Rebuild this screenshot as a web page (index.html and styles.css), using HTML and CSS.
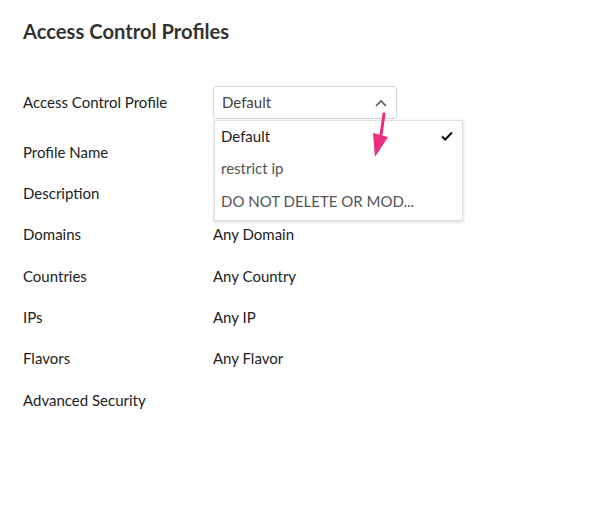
FILE: index.html
```html
<!DOCTYPE html>
<html>
<head>
<meta charset="utf-8">
<link rel="stylesheet" href="styles.css">
</head>
<body>
<div class="page">
  <h1 class="title">Access Control Profiles</h1>
  <div class="form">
    <div class="row row-select">
      <div class="label">Access Control Profile</div>
      <div class="value">
        <div class="select-wrap">
          <div class="select">
            <span>Default</span>
            <svg class="caret" width="12" height="8" viewBox="0 0 12 8"><path d="M1 7 L6 2 L11 7" fill="none" stroke="#555" stroke-width="1.6"/></svg>
          </div>
          <div class="menu">
            <div class="opt opt-selected"><span>Default</span><svg class="check" width="12" height="10" viewBox="0 0 12 10"><path d="M1 5.5 L4.2 8.5 L11 1.5" fill="none" stroke="#111" stroke-width="2"/></svg></div>
            <div class="opt">restrict ip</div>
            <div class="opt">DO NOT DELETE OR MOD...</div>
          </div>
          <svg class="pointer" width="30" height="50" viewBox="0 0 30 50"><path d="M16 3 L13 24" stroke="#ec2e7e" stroke-width="3" fill="none" stroke-linecap="round"/><path d="M5 22 L20 26 L7 46 Z" fill="#ec2e7e"/></svg>
        </div>
      </div>
    </div>
    <div class="row">
      <div class="label">Profile Name</div>
      <div class="value">Default</div>
    </div>
    <div class="row">
      <div class="label">Description</div>
      <div class="value">Default Profile</div>
    </div>
    <div class="row">
      <div class="label">Domains</div>
      <div class="value">Any Domain</div>
    </div>
    <div class="row">
      <div class="label">Countries</div>
      <div class="value">Any Country</div>
    </div>
    <div class="row">
      <div class="label">IPs</div>
      <div class="value">Any IP</div>
    </div>
    <div class="row">
      <div class="label">Flavors</div>
      <div class="value">Any Flavor</div>
    </div>
    <div class="row">
      <div class="label">Advanced Security</div>
      <div class="value"></div>
    </div>
  </div>
</div>
</body>
</html>
```
FILE: styles.css
```css
html, body {
  margin: 0;
  padding: 0;
  background: #fff;
}
body {
  font-family: Lato, "Open Sans", sans-serif;
  color: #333;
  width: 613px;
  height: 524px;
  overflow: hidden;
}
.page {
  padding: 19px 0 0 23px;
}
.title {
  margin: 0;
  font-size: 20.2px;
  font-weight: 700;
  line-height: 24px;
  color: #333;
}
.form {
  margin-top: 43px;
  display: flex;
  flex-direction: column;
}
.row {
  display: grid;
  grid-template-columns: 190px 1fr;
  font-size: 15px;
  line-height: 17px;
  height: 41.4px;
  align-items: start;
}
.row-select {
  height: 57.5px;
}
.row-select .label {
  padding-top: 8px;
}
.label {
  color: #222;
}
.value {
  color: #222;
}
.select-wrap {
  position: relative;
  width: 184px;
}
.select {
  box-sizing: border-box;
  width: 184px;
  height: 33px;
  border: 1px solid #d4d4d4;
  border-radius: 3px;
  display: flex;
  align-items: center;
  justify-content: space-between;
  padding: 0 9px 0 8px;
  color: #444;
}
.caret {
  display: block;
}
.menu {
  position: absolute;
  top: 34px;
  left: 1px;
  width: 249px;
  box-sizing: border-box;
  background: #fff;
  border: 1px solid #e0e0e0;
  box-shadow: 0 1px 3px rgba(0,0,0,0.18);
  padding: 0 0 1px;
  z-index: 5;
}
.opt {
  box-sizing: border-box;
  height: 32.5px;
  display: flex;
  align-items: center;
  justify-content: space-between;
  padding: 0 9px 2px 6px;
  color: #555;
  font-size: 15px;
}
.opt-selected {
  color: #222;
}
.check {
  display: block;
}
.pointer {
  position: absolute;
  left: 155px;
  top: 25px;
  z-index: 10;
}
```
